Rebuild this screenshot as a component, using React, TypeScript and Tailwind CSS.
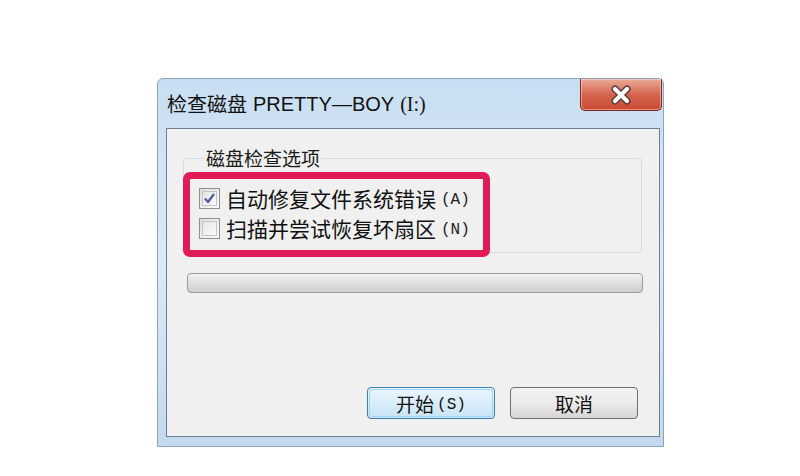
import React from "react";

const cjk = '"Noto Sans CJK SC", "Liberation Sans", sans-serif';

function Check({ checked }: { checked: boolean }) {
  return (
    <div className="w-[21px] h-[21px] border border-[#8f8f8f] bg-gradient-to-br from-[#dcdcdc] to-[#ffffff] p-[2px] shrink-0">
      <div className="w-full h-full border border-[#c4c4c4] bg-gradient-to-br from-[#e4e4e4] to-[#fbfbfb] flex items-center justify-center">
        {checked && (
          <svg width="13" height="13" viewBox="0 0 13 13">
            <path d="M2 6.5 L5 10 L11 2" fill="none" stroke="#4a5f97" strokeWidth="2.2" strokeLinejoin="round" />
          </svg>
        )}
      </div>
    </div>
  );
}

export default function App() {
  return (
    <div className="w-[800px] h-[476px] bg-white pl-[157px] pt-[78px]" style={{ fontFamily: cjk }}>
      <div className="w-[507px] h-[369px] flex flex-col rounded-t-[6px] border border-[#8aa4c0] bg-gradient-to-b from-[#c9def2] via-[#dbe9f6] to-[#c4d9ee]">
        {/* Title bar */}
        <div className="h-[49px] flex items-start justify-between">
          <div className="h-full flex items-center pl-[9px] text-[20px] text-[#111] leading-none">
            <span>检查磁盘</span>
            <span className="ml-[6px]" style={{ fontFamily: '"Liberation Sans", sans-serif' }}>PRETTY—BOY</span>
            <span className="ml-[6px]" style={{ fontFamily: '"Liberation Serif", serif' }}>(I:)</span>
          </div>
          <div className="mr-[1px] w-[82px] h-[32px] rounded-b-[5px] border border-t-0 border-[#7a2a20] bg-gradient-to-b from-[#e9ab9b] via-[#d3644e] to-[#c94a33] flex items-center justify-center shadow-[inset_0_0_0_1px_rgba(255,220,210,0.5)]">
            <svg width="24" height="20" viewBox="0 0 24 20">
              <path d="M6 4 L18 16 M18 4 L6 16" stroke="#5a3a36" strokeWidth="7" strokeLinecap="round" />
              <path d="M6 4 L18 16 M18 4 L6 16" stroke="#ffffff" strokeWidth="4.2" strokeLinecap="round" />
            </svg>
          </div>
        </div>
        {/* Client */}
        <div className="ml-[8px] mr-[3px] w-[494px] h-[309px] border border-[#6f7f90] bg-[#f0f0f0] flex flex-col">
          <div className="relative mt-[19px] ml-[16px] w-[459px]">
            <fieldset className="border border-[#d5dbe0] rounded-[3px] h-[105px] pl-[15px] pt-[15px]">
              <legend className="ml-[6px] px-[1px] text-[19px] leading-[20px] text-[#1a1a1a]">磁盘检查选项</legend>
              <div className="flex flex-col">
                <div className="h-[30px] flex items-center">
                  <Check checked />
                  <span className="ml-[6px] text-[21px] leading-none text-[#111]">自动修复文件系统错误</span>
                  <span className="ml-[5px] mt-[4px] text-[16px] leading-none text-[#222]" style={{ fontFamily: '"Liberation Mono", monospace' }}>(A)</span>
                </div>
                <div className="h-[30px] flex items-center">
                  <Check checked={false} />
                  <span className="ml-[6px] text-[21px] leading-none text-[#111]">扫描并尝试恢复坏扇区</span>
                  <span className="ml-[5px] mt-[4px] text-[16px] leading-none text-[#222]" style={{ fontFamily: '"Liberation Mono", monospace' }}>(N)</span>
                </div>
              </div>
            </fieldset>
            <div className="absolute left-[0px] top-[24px] w-[307px] h-[85px] border-[7px] border-[#e01c57] rounded-[7px]" />
          </div>
          <div className="mt-[20px] ml-[20px] w-[456px] h-[20px] rounded-[4px] border border-[#9c9c9c] bg-gradient-to-b from-[#f3f3f3] via-[#dedede] to-[#cfcfcf]" />
          <div className="flex-1" />
          <div className="flex justify-end gap-[15px] pr-[21px] pb-[17px]">
            <div className="w-[128px] h-[32px] rounded-[4px] border border-[#3c7fb1] bg-gradient-to-b from-[#eaf6fd] to-[#c8e4f6] p-[1px]">
              <div className="w-full h-full rounded-[3px] border border-[#9ed6f3] flex items-center justify-center text-[19px] text-[#111] leading-none">
                <span>开始</span>
                <span className="ml-[3px] mt-[3px] text-[16px]" style={{ fontFamily: '"Liberation Mono", monospace' }}>(S)</span>
              </div>
            </div>
            <div className="w-[128px] h-[32px] rounded-[4px] border border-[#707070] bg-gradient-to-b from-[#f2f2f2] via-[#ebebeb] to-[#d6d6d6] flex items-center justify-center text-[19px] text-[#111] leading-none">
              取消
            </div>
          </div>
        </div>
      </div>
    </div>
  );
}
